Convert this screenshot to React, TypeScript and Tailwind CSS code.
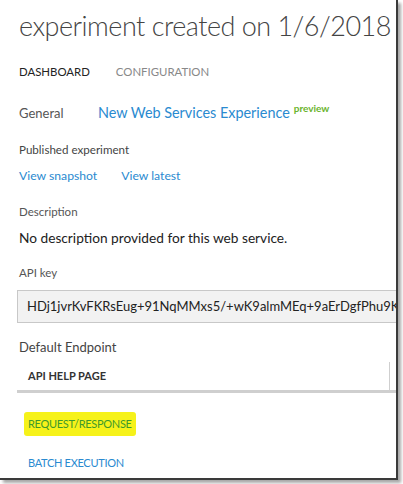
export default function App() {
  return (
    <div className="w-[403px] h-[484px] bg-white overflow-hidden" style={{ fontFamily: 'Lato, "Open Sans", sans-serif' }}>
      <div className="relative w-[398px] h-[480px] bg-white border-r-2 border-b-2 border-[#3a3a3a] shadow-[3px_3px_3px_rgba(0,0,0,0.35)] overflow-hidden">
        <div className="pl-[19px] pt-[6px]">
          <h1 className="text-[27px] leading-[40px] font-light text-[#444] whitespace-nowrap tracking-[-0.5px]">
            experiment created on 1/6/2018
          </h1>

          <div className="flex gap-[26px] mt-[18px] text-[11.4px] leading-[16px]">
            <span className="text-[#222]">DASHBOARD</span>
            <span className="text-[#888]">CONFIGURATION</span>
          </div>

          <div className="flex items-baseline mt-[23px] leading-[20px]">
            <span className="w-[79px] text-[13px] text-[#555]">General</span>
            <span className="text-[14.4px] text-[#2a8ad0]">New Web Services Experience</span>
            <span className="ml-[4px] text-[10px] font-bold text-[#6ab42c] relative -top-[6px]">preview</span>
          </div>

          <div className="mt-[18px] text-[11.6px] leading-[16px] text-[#444]">Published experiment</div>
          <div className="flex gap-[24px] mt-[9px] text-[12.2px] leading-[18px] text-[#2a8ad0]">
            <span>View snapshot</span>
            <span>View latest</span>
          </div>

          <div className="mt-[19px] text-[11.5px] leading-[16px] text-[#555]">Description</div>
          <div className="mt-[9px] text-[13.7px] leading-[18px] text-[#222]">No description provided for this web service.</div>

          <div className="mt-[18px] text-[11.5px] leading-[16px] text-[#555]">API key</div>
        </div>

        <div className="ml-[17px] mt-[9px] h-[33px] flex items-center pl-[9px] bg-[#f2f2f2] border border-[#c8c8c8] border-r-0 text-[13px] text-[#222] whitespace-nowrap overflow-hidden">
          HDj1jvrKvFKRsEug+91NqMMxs5/+wK9almMEq+9aErDgfPhu9Kc
        </div>

        <div className="pl-[19px] mt-[15px] text-[13px] leading-[18px] text-[#444]">Default Endpoint</div>

        <div className="ml-[17px] mt-[6px] flex h-[31px] border-b-[3px] border-[#cfcfcf]">
          <div className="flex-1 pl-[11px] text-[11px] font-bold text-[#333] flex items-center border-r border-[#cfcfcf]">API HELP PAGE</div>
          <div className="w-[6px]"></div>
        </div>

        <div className="pl-[24px] mt-[17px] leading-[24px]">
          <span className="inline-block bg-[#f6f21a] px-[4px] py-[3px] rounded-[3px] text-[11px] tracking-[-0.3px] leading-[18px] text-[#3f9a2a]">REQUEST/RESPONSE</span>
        </div>
        <div className="pl-[28px] mt-[19px] text-[11px] tracking-[-0.3px] leading-[16px] text-[#2a8ad0]">BATCH EXECUTION</div>
      </div>
    </div>
  );
}
